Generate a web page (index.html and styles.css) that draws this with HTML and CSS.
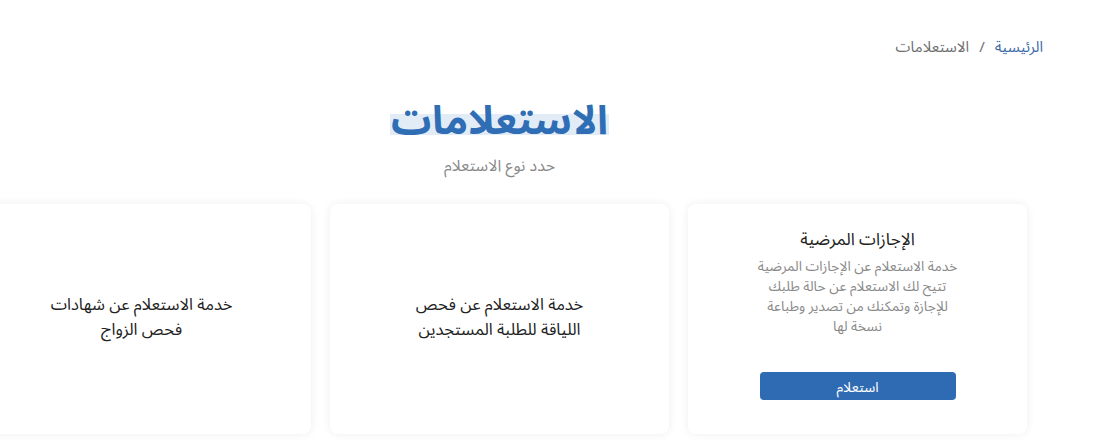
FILE: index.html
```html
<!DOCTYPE html>
<html lang="ar" dir="rtl">
<head>
<meta charset="utf-8">
<title>الاستعلامات</title>
<link rel="stylesheet" href="styles.css">
</head>
<body>
<div class="page">
  <nav class="breadcrumb">
    <a class="crumb-link" href="#">الرئيسية</a>
    <span class="crumb-sep">/</span>
    <span class="crumb-current">الاستعلامات</span>
  </nav>
  <section class="inquiries">
    <header class="heading">
      <h1 class="title"><span class="title-mark">الاستعلامات</span></h1>
      <p class="subtitle">حدد نوع الاستعلام</p>
    </header>
    <div class="cards">
      <div class="card card-detail">
        <h2 class="card-title">الإجازات المرضية</h2>
        <p class="card-desc">خدمة الاستعلام عن الإجازات المرضية<br>تتيح لك الاستعلام عن حالة طلبك<br>للإجازة وتمكنك من تصدير وطباعة<br>نسخة لها</p>
        <button class="card-btn" type="button">استعلام</button>
      </div>
      <div class="card card-simple">
        <p class="card-text">خدمة الاستعلام عن فحص<br>اللياقة للطلبة المستجدين</p>
      </div>
      <div class="card card-simple">
        <p class="card-text">خدمة الاستعلام عن شهادات<br>فحص الزواج</p>
      </div>
    </div>
  </section>
</div>
</body>
</html>
```

FILE: styles.css
```css
* { box-sizing: border-box; }
html, body {
  margin: 0;
  padding: 0;
  background: #ffffff;
}
body {
  font-family: "Noto Sans Arabic", "DejaVu Sans", sans-serif;
  color: #222;
  overflow: hidden;
}
.page {
  width: 1112px;
  height: 446px;
  overflow: hidden;
}
.breadcrumb {
  display: flex;
  align-items: center;
  gap: 10px;
  padding: 36px 69px 0 0;
  height: 58px;
  font-size: 15px;
  line-height: 20px;
}
.crumb-link {
  color: #3d6aa6;
  text-decoration: none;
}
.crumb-sep, .crumb-current {
  color: #6f6f6f;
}
.inquiries {
  width: 1055px;
  margin-right: 85px;
}
.heading {
  text-align: center;
  padding-top: 42px;
}
.title {
  margin: 0;
  font-size: 40px;
  line-height: 44px;
  height: 44px;
  font-weight: 700;
  color: #2f6db4;
}
.title-mark {
  display: inline-block;
  vertical-align: top;
  height: 44px;
  line-height: 44px;
  padding: 0 1px;
  background: linear-gradient(to bottom, transparent 0, transparent 14px, #e2ecf6 14px, #e2ecf6 35px, transparent 35px);
}
.subtitle {
  margin: 12px 0 0;
  font-size: 16px;
  line-height: 20px;
  color: #8a8a8a;
}
.cards {
  display: flex;
  gap: 19px;
  margin-top: 28px;
}
.card {
  flex: 0 0 339px;
  height: 230px;
  background: #fff;
  border-radius: 8px;
  box-shadow: 0 0 10px rgba(0, 0, 0, 0.07);
  display: flex;
  flex-direction: column;
  align-items: center;
  text-align: center;
}
.card-detail {
  padding-top: 25px;
}
.card-title {
  margin: 0;
  font-size: 17px;
  line-height: 22px;
  font-weight: 400;
  color: #222;
}
.card-desc {
  margin: 6px 0 0;
  font-size: 13.8px;
  line-height: 20px;
  color: #8a8a8a;
}
.card-btn {
  margin-top: 35px;
  width: 196px;
  height: 28px;
  border: 0;
  border-radius: 4px;
  background: #2f6bb3;
  color: #fff;
  font-family: inherit;
  font-size: 14px;
  cursor: pointer;
}
.card-simple {
  justify-content: center;
}
.card-text {
  margin: 0 0 5px;
  font-size: 16.5px;
  line-height: 25px;
  color: #222;
}
```
